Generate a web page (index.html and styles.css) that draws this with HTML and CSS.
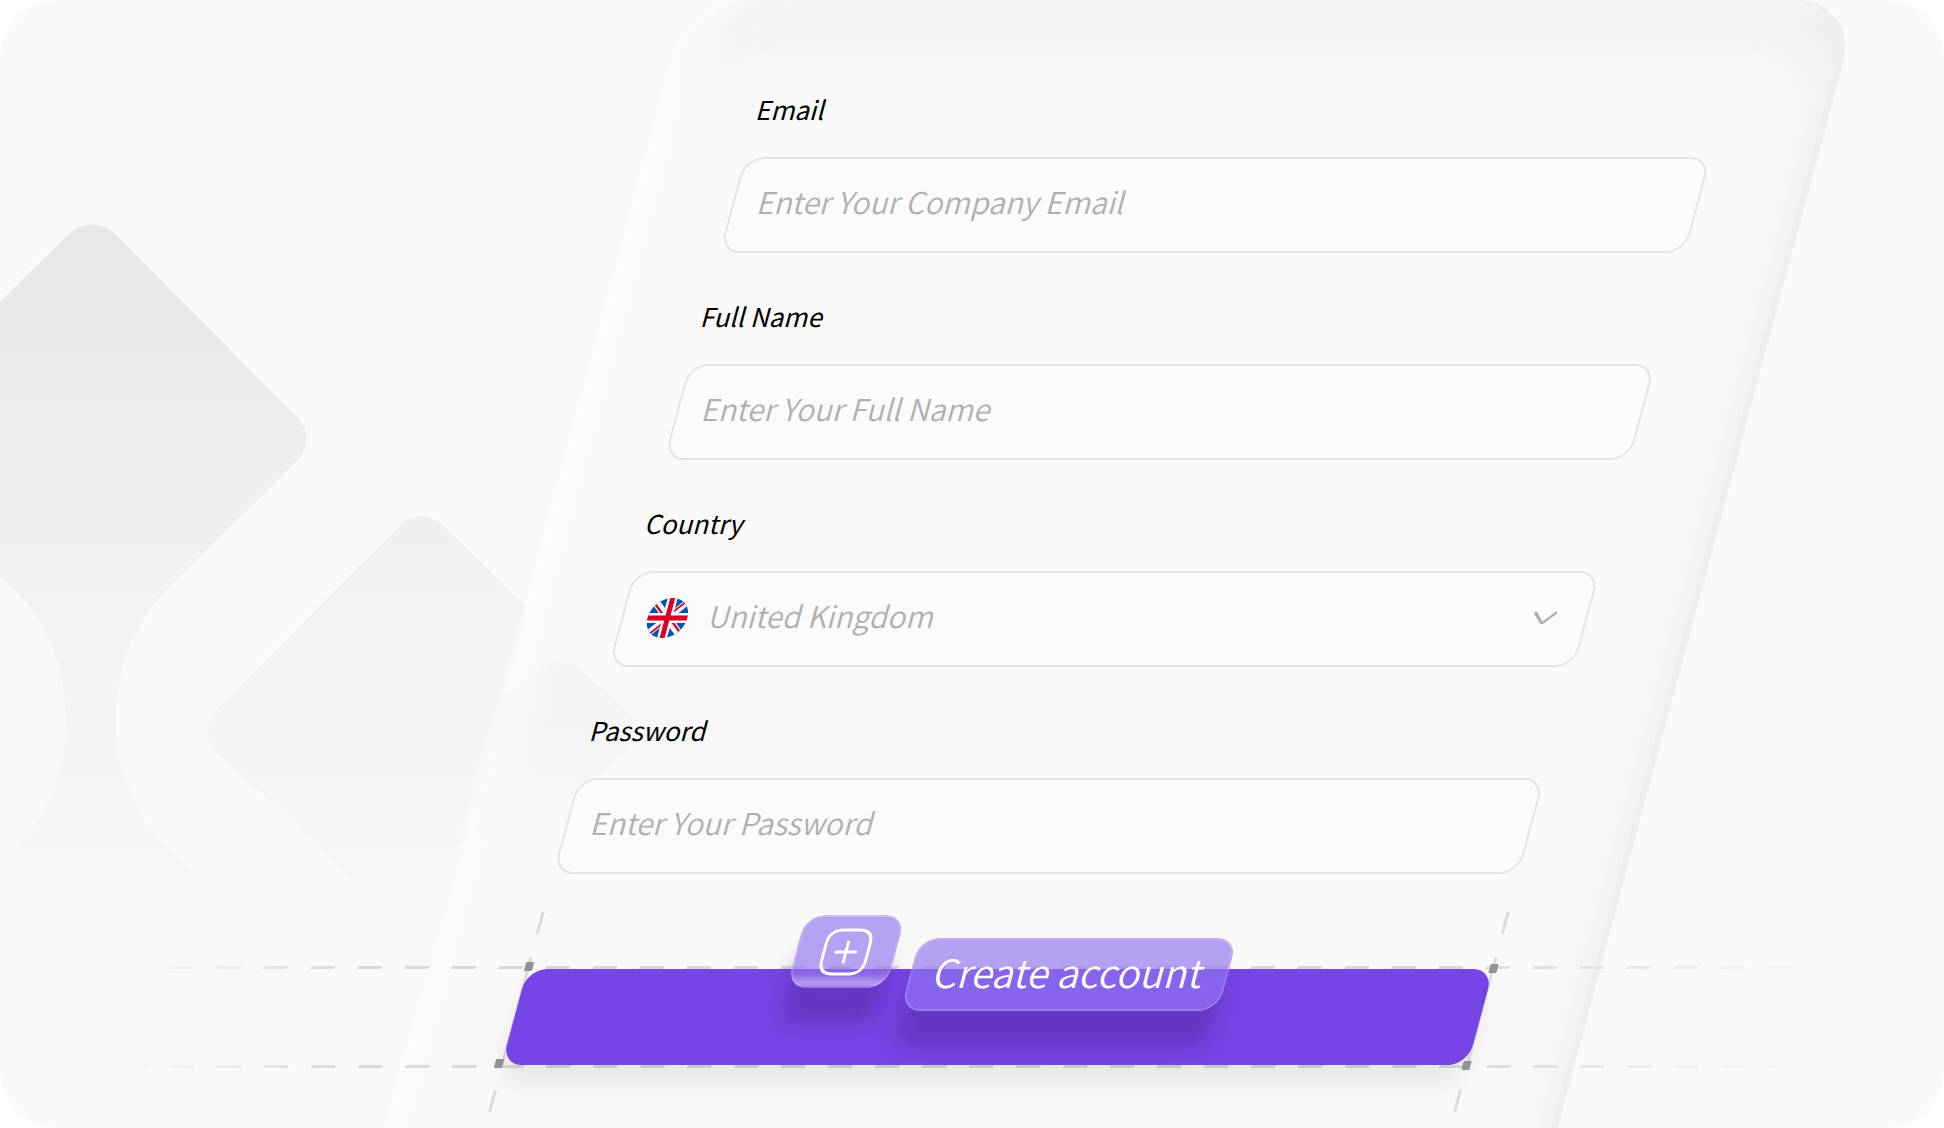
FILE: index.html
```html
<!DOCTYPE html>
<html lang="en">
<head>
<meta charset="UTF-8">
<meta name="viewport" content="width=device-width, initial-scale=1.0">
<title>Create account</title>
<link rel="stylesheet" href="styles.css">
</head>
<body>

<main class="scene">

  <svg class="pattern" width="720" height="1128" viewBox="0 0 720 1128" aria-hidden="true">
    <defs>
      <linearGradient id="fade" gradientUnits="userSpaceOnUse" x1="0" y1="224" x2="0" y2="1030">
        <stop offset="0" stop-color="#e7e7e7"/>
        <stop offset="0.3" stop-color="#eeeeee"/>
        <stop offset="0.56" stop-color="#f3f3f3"/>
        <stop offset="0.85" stop-color="#f7f7f7"/>
        <stop offset="1" stop-color="#f9f9f9"/>
      </linearGradient>
    </defs>
    <path fill="url(#fade)" d="M0 302 L70 233 Q92 216 114 233 L299 419 Q314 439 299 459 L172 584 C97 656 97 782 172 854 L280 962 Q306 988 306 1030 L0 1030 V860 C88 800 88 640 0 578 Z"/>
    <path fill="url(#fade)" d="M400 525 L620 740 L620 1030 L394 1030 C398 960 385 910 340 865 L214 750 Q201 731 214 712 L400 525 Q421 508 443 525 L620 700 V800 Z"/>
  </svg>

  <form class="panel">
    <svg class="panel-pattern" width="200" height="220" viewBox="0 0 200 220" aria-hidden="true">
      <defs>
        <linearGradient id="soft" x1="0" y1="0" x2="0" y2="1">
          <stop offset="0" stop-color="#f4f4f4"/>
          <stop offset="0.5" stop-color="#f5f5f5"/>
          <stop offset="1" stop-color="#f9f9f9"/>
        </linearGradient>
        <linearGradient id="side" x1="0" y1="0" x2="1" y2="0">
          <stop offset="0" stop-color="#fff" stop-opacity="0"/>
          <stop offset="0.3" stop-color="#fff"/>
        </linearGradient>
        <mask id="sideMask"><rect width="200" height="220" fill="url(#side)"/></mask>
      </defs>
      <path mask="url(#sideMask)" fill="url(#soft)" d="M7 40 L38 7 Q58 -2 78 7 L141 55 Q157 70 149 87 L106 140 L91 168 Q70 194 29 180 L4 150 Z"/>
    </svg>

    <div class="field">
      <label for="email">Email</label>
      <input class="control" type="email" id="email" name="email" placeholder="Enter Your Company Email">
    </div>

    <div class="field">
      <label for="fullName">Full Name</label>
      <input class="control" type="text" id="fullName" name="fullName" placeholder="Enter Your Full Name">
    </div>

    <div class="field">
      <label for="country">Country</label>
      <div class="select-wrap">
        <select class="control" id="country" name="country">
          <option>United Kingdom</option>
        </select>
        <svg class="flag" viewBox="0 0 40 40" aria-hidden="true">
          <defs><clipPath id="round"><circle cx="20" cy="20" r="20"/></clipPath></defs>
          <g clip-path="url(#round)">
            <rect width="40" height="40" fill="#0052b4"/>
            <path d="M0 0 L40 40 M40 0 L0 40" stroke="#f7f7f7" stroke-width="7"/>
            <path d="M4 6 L17 19 M34 4 L21 17 M36 34 L23 21 M6 36 L19 23" stroke="#d80027" stroke-width="2"/>
            <path d="M20 0 V40 M0 20 H40" stroke="#f7f7f7" stroke-width="10"/>
            <path d="M20 0 V40 M0 20 H40" stroke="#d80027" stroke-width="5"/>
          </g>
        </svg>
        <svg class="chevron" viewBox="0 0 24 14" aria-hidden="true">
          <path d="M2 2 L9.500 11 Q11 12.500 12.500 11 L22 2" fill="none" stroke="#b3b3b3" stroke-width="3" stroke-linecap="round"/>
        </svg>
      </div>
    </div>

    <div class="field">
      <label for="password">Password</label>
      <input class="control" type="password" id="password" name="password" placeholder="Enter Your Password">
    </div>

    <div class="submit">
      <span class="guide guide-h guide-top"></span>
      <span class="guide guide-h guide-bottom"></span>
      <span class="guide guide-v guide-left"></span>
      <span class="guide guide-v guide-right"></span>
      <button class="submit-button" type="button">
        <span class="badges">
          <span class="badge badge-icon">
            <svg width="50" height="48" viewBox="0 0 50 48" fill="none" stroke="#fff" stroke-width="3" stroke-linecap="round" aria-hidden="true">
              <path d="M17 2 H33 Q47 2 47 16 V32 Q47 46 33 46 H17 Q3 46 3 32 V16 Q3 2 17 2 Z"/>
              <path d="M25 14 V34 M15 24 H35"/>
            </svg>
          </span>
          <span class="badge badge-text">Create account</span>
        </span>
      </button>
      <span class="handle handle-tl"></span>
      <span class="handle handle-tr"></span>
      <span class="handle handle-bl"></span>
      <span class="handle handle-br"></span>
    </div>
  </form>

</main>

</body>
</html>
```

FILE: styles.css
```css
* {
  box-sizing: border-box;
}

body {
  margin: 0;
  background-color: #fff;
  font-family: "Noto Sans CJK SC", "Noto Sans", sans-serif;
}

.scene {
  position: relative;
  height: 100vh;
  min-height: 1128px;
  overflow: hidden;
  background-color: #f9f9f9;
  border-radius: 60px;
}

.pattern {
  position: absolute;
  top: 0;
  left: 0;
}

/* Everything in the panel leans with it */
.panel {
  position: relative;
  width: 60.2%;
  margin-left: 35.5%;
  padding: 91px 107px 200px 97px;
  background-color: #f9f9f9;
  border-radius: 64px 64px 0 0;
  box-shadow:
    inset -7px 0 0 #eeeeee,
    inset 24px 0 40px rgba(255, 255, 255, 0.8),
    inset 0 28px 80px rgba(0, 0, 0, 0.05),
    inset 0 8px 40px rgba(0, 0, 0, 0.02),
    -2px 0 8px rgba(255, 255, 255, 0.8);
  transform: skewX(-15deg);
  transform-origin: 0 0;
}

.panel-pattern {
  position: absolute;
  top: 660px;
  left: -10px;
}

.field {
  position: relative;
  display: flex;
  flex-direction: column;
  gap: 30px;
  margin-bottom: 45px;
}

label {
  font-size: 26px;
  line-height: 36px;
  color: #000;
}

.control {
  display: block;
  width: 100%;
  height: 96px;
  padding: 0 24px 8px;
  border: 2px solid #e4e4e4;
  border-radius: 20px;
  background-color: #fbfbfb;
  color: #b0b0b0;
  font-family: inherit;
  font-size: 30px;
  font-weight: 350;
  appearance: none;
}

.control::placeholder {
  color: #b0b0b0;
  opacity: 1;
}

.select-wrap {
  position: relative;
}

.select-wrap .control {
  padding: 0 80px 8px 86px;
}

.flag {
  position: absolute;
  top: 27px;
  left: 26px;
  width: 40px;
  height: 40px;
  pointer-events: none;
}

.chevron {
  position: absolute;
  top: 40px;
  right: 31px;
  width: 24px;
  height: 14px;
  pointer-events: none;
}

.submit {
  position: relative;
  margin-top: 95px;
}

.submit-button {
  position: relative;
  display: block;
  width: 100%;
  height: 96px;
  padding: 0;
  border: none;
  border-radius: 20px;
  background-color: #7745e6;
  box-shadow: 0 20px 24px rgba(0, 0, 0, 0.07);
  font-family: inherit;
  cursor: pointer;
}

.badges {
  position: absolute;
  top: -54px;
  left: 0;
  right: 0;
  display: flex;
  justify-content: center;
  align-items: flex-start;
  gap: 20px;
}

.badge {
  display: flex;
  align-items: center;
  justify-content: center;
  height: 73px;
  border: 2px solid rgba(255, 255, 255, 0.15);
  border-radius: 20px;
  background-color: rgba(146, 116, 238, 0.66);
  box-shadow: 0 38px 20px -2px rgba(70, 30, 130, 0.35);
  color: #fff;
}

.badge-icon {
  width: 100px;
  background: linear-gradient(rgba(146, 116, 238, 0.66) 76%, rgba(146, 108, 226, 0.8) 82%, rgba(190, 160, 240, 0.85) 94%);
}

.badge-text {
  margin-top: 23px;
  padding: 0 22px 8px;
  font-size: 39px;
  font-weight: 350;
  line-height: 54px;
}

/* Dashed guides and corner handles round the button */
.guide {
  position: absolute;
}

.guide-h {
  right: -340px;
  height: 3px;
  background: repeating-linear-gradient(90deg, #d9d9d9 0 24px, transparent 24px 47px);
  mask-image: linear-gradient(90deg, transparent, #000 14%, #000 78%, transparent);
}

.guide-top {
  top: -3px;
  left: -405px;
}

.guide-bottom {
  bottom: -3px;
  left: -378px;
}

.guide-v {
  top: -57px;
  bottom: -47px;
  width: 3px;
  background: linear-gradient(#dcdcdc 0 22px, transparent 22px 45px, #dcdcdc 45px 155px, transparent 155px 178px, #dcdcdc 178px);
}

.guide-left {
  left: -1px;
}

.guide-right {
  right: -1px;
}

.handle {
  position: absolute;
  width: 8px;
  height: 9px;
  border-radius: 1px;
  background-color: #929292;
}

.handle-tl {
  top: -7px;
  left: -3px;
}

.handle-tr {
  top: -5px;
  right: -4px;
}

.handle-bl {
  bottom: -3px;
  left: -7px;
}

.handle-br {
  bottom: -5px;
  right: -3px;
}
```
